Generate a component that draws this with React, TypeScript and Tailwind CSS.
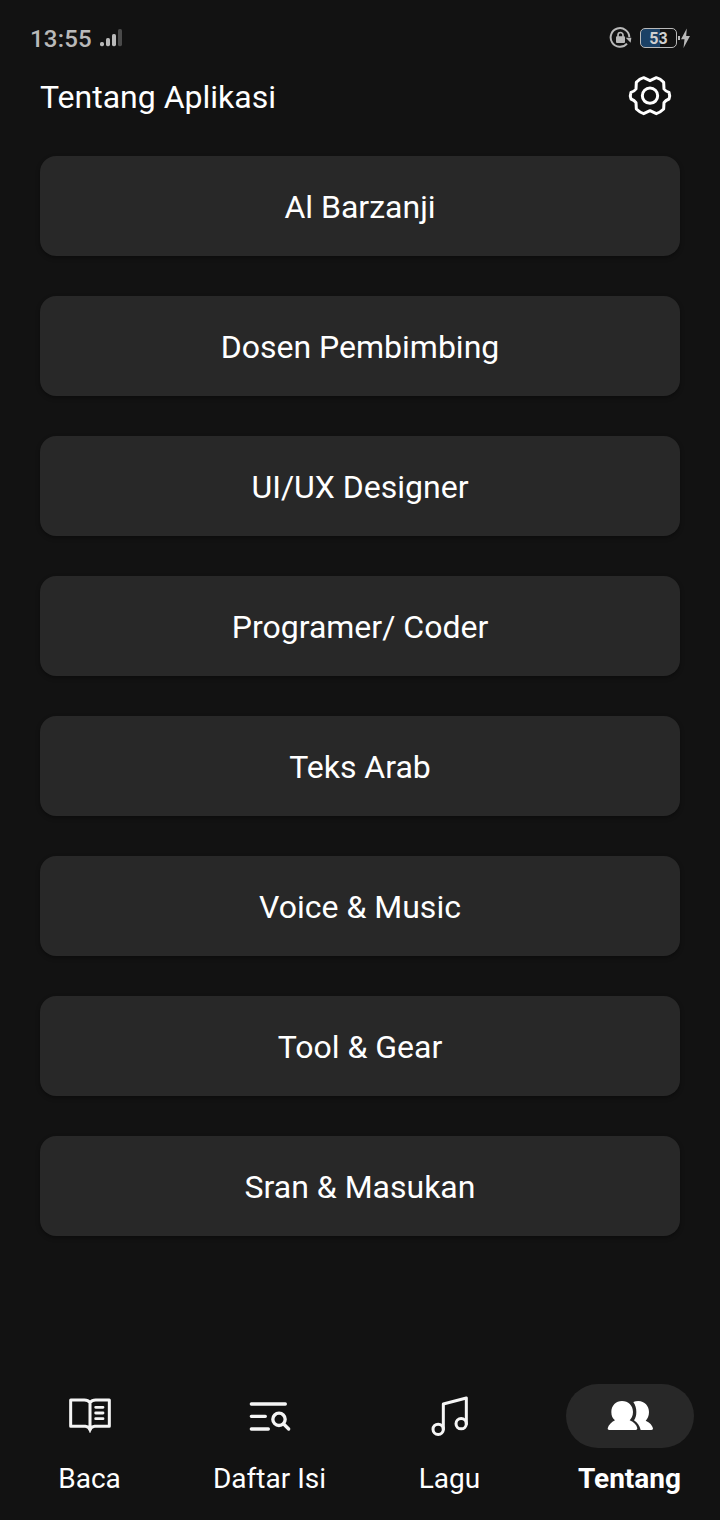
import type { ReactNode } from "react";

const topics = [
  "Al Barzanji",
  "Dosen Pembimbing",
  "UI/UX Designer",
  "Programer/ Coder",
  "Teks Arab",
  "Voice & Music",
  "Tool & Gear",
  "Sran & Masukan",
];

function SignalIcon() {
  return (
    <svg className="ml-2 h-5 w-6" viewBox="0 0 24 20">
      <g fill="#b9b9b9">
        <rect x="0" y="14" width="4" height="4.200" rx="1.6" />
        <rect x="6" y="10" width="4" height="8.2" rx="1.6" />
        <rect x="12" y="6" width="4" height="12.2" rx="1.6" />
      </g>
      <rect x="18" y="1" width="4" height="17.2" rx="1.6" fill="#4a4a4a" />
    </svg>
  );
}

function RotationLockIcon() {
  return (
    <svg className="h-6 w-6" viewBox="27 33 72 72" fill="none">
      <path d="M81 86A28 28 0 1 1 88 67" stroke="#b9b9b9" strokeWidth="6" />
      <path d="M77 68H94L92 83Z" fill="#b9b9b9" />
      <rect x="48" y="64" width="27" height="20" rx="3" fill="#b9b9b9" />
      <path d="M54 66V60a7.500 7.500 0 0 1 15 0v6" stroke="#b9b9b9" strokeWidth="5" />
    </svg>
  );
}

function BoltIcon() {
  return (
    <svg className="h-[22px] w-[9px]" viewBox="0 0 9 22">
      <path d="M5.8 1.4L0 12.200h3.5L2.5 21L9 8.900H5.2z" fill="#b9b9b9" />
    </svg>
  );
}

function GearIcon() {
  return (
    <svg className="h-[42px] w-11" viewBox="84 180 132 126" fill="none" stroke="white" strokeWidth="9" strokeLinejoin="round">
      <path d="M131 188L150 197L169 188Q181 191 191 202L192 222Q197 229 207 232Q211 242 207 252Q197 256 192 263L191 282Q181 292 169 296L150 287L131 296Q119 292 109 282L108 263Q103 256 93 252Q89 242 93 232Q103 229 108 222L109 202Q119 191 131 188Z" />
      <circle cx="150" cy="242" r="23" />
    </svg>
  );
}

function BookIcon() {
  return (
    <svg className="h-16 w-20" viewBox="0 12 240 192" fill="none" stroke="#f5f5f5" strokeLinecap="round" strokeLinejoin="round">
      <path d="M120 68Q114 60 103 60H62V139H106Q116 140 120 148Q124 140 134 139H178V60H137Q126 60 120 68V146" strokeWidth="9" />
      <path d="M113 142L120 158L127 142Z" fill="#f5f5f5" strokeWidth="2" />
      <path d="M137 82H159M137 99H159M137 116H159" strokeWidth="8.5" />
    </svg>
  );
}

function ListSearchIcon() {
  return (
    <svg className="h-16 w-20" viewBox="0 12 240 192" fill="none" stroke="#f5f5f5" strokeLinecap="round">
      <path d="M64 72H166M64 109H106M64 147H115" strokeWidth="10" />
      <circle cx="147" cy="118" r="18.5" strokeWidth="10" />
      <path d="M161 132L176 147" strokeWidth="10" />
    </svg>
  );
}

function MusicIcon() {
  return (
    <svg className="h-16 w-20" viewBox="0 12 240 192" fill="none" stroke="#f5f5f5" strokeWidth="9" strokeLinecap="round" strokeLinejoin="round">
      <path d="M100 148V72L169 54V131" />
      <circle cx="84.5" cy="148" r="15.5" />
      <circle cx="153.5" cy="131" r="15.5" />
    </svg>
  );
}

function PeopleIcon() {
  return (
    <svg className="h-16 w-32" viewBox="30 30 384 192" fill="white">
      <path d="M198 81C217 81 231 95 231 114C231 126 226 133 221 139C234 144 242 153 244 163Q244 168 239 168H160Q154 168 155 163C158 153 166 144 177 139C170 133 166 126 166 114C166 95 180 81 198 81Z" />
      <path d="M232 84Q239 81 247 81C266 81 279 96 279 114C279 126 275 133 269 140C281 145 289 154 291 163Q292 168 286 168H254C251 155 245 147 234 139C239 132 241 124 241 114C241 103 238 93 232 84Z" />
    </svg>
  );
}

function NavItem({ label, icon, active = false }: { label: string; icon: ReactNode; active?: boolean }) {
  return (
    <button className="flex w-[180px] flex-col items-center">
      <span className={active ? "flex h-16 w-32 justify-center rounded-full bg-[#282828]" : "flex h-16 w-32 justify-center"}>
        {icon}
      </span>
      <span className={active ? "mt-[13px] pr-px text-[28px] leading-9 font-bold whitespace-nowrap" : "mt-[13px] pr-px text-[28px] leading-9 whitespace-nowrap"}>
        {label}
      </span>
    </button>
  );
}

export default function App() {
  return (
    <div className="flex h-[1520px] w-[720px] flex-col overflow-hidden bg-[#121212] font-['Roboto',sans-serif] text-white">
      <div className="flex h-[76px] items-center justify-between pr-[30px] pl-[30px] text-[#b9b9b9]">
        <div className="flex items-center">
          <span className="pt-[2px] text-[24px] leading-8 font-medium tracking-[0.2px]">13:55</span>
          <SignalIcon />
        </div>
        <div className="flex items-center">
          <RotationLockIcon />
          <div className="ml-[7px] flex h-5 w-[37px] items-center justify-center rounded-[5px] border border-[#b9b9b9] bg-[linear-gradient(90deg,#1b4166_53%,#121212_53%)] pt-[2px] text-[16px] leading-5 font-bold text-[#d0d0d0]">
            53
          </div>
          <div className="mr-px ml-px h-1 w-[2px] bg-[#b9b9b9]" />
          <BoltIcon />
        </div>
      </div>
      <header className="flex h-10 items-center justify-between pr-12 pl-10">
        <h1 className="pt-[2px] text-[32px] leading-10">Tentang Aplikasi</h1>
        <GearIcon />
      </header>
      <main className="mt-10 flex flex-col gap-10 px-10">
        {topics.map((topic) => (
          <button key={topic} className="h-[100px] rounded-2xl bg-[#282828] pt-[2px] text-[32px] leading-10 shadow-[0_2px_4px_rgba(0,0,0,0.35)]">
            {topic}
          </button>
        ))}
      </main>
      <nav className="mt-[148px] flex">
        <NavItem label="Baca" icon={<BookIcon />} />
        <NavItem label="Daftar Isi" icon={<ListSearchIcon />} />
        <NavItem label="Lagu" icon={<MusicIcon />} />
        <NavItem label="Tentang" icon={<PeopleIcon />} active />
      </nav>
    </div>
  );
}
